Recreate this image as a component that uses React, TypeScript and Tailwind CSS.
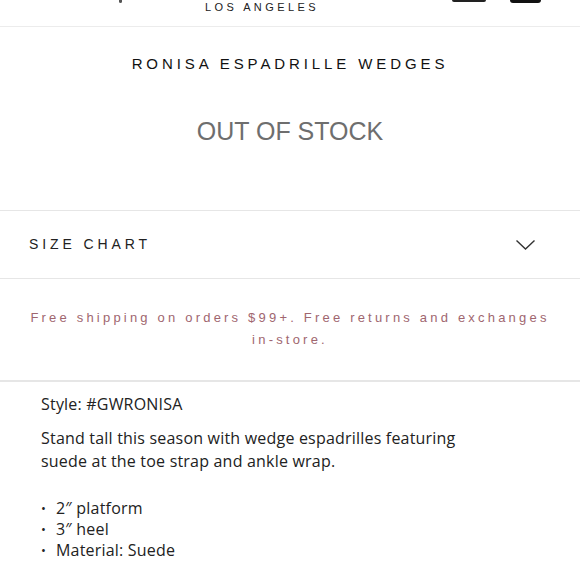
const sans = { fontFamily: '"Liberation Sans", Arial, sans-serif' };
const body = { fontFamily: '"Open Sans", "Liberation Sans", Arial, sans-serif' };

function Header() {
  return (
    <header className="relative h-[27px] border-b border-[#ececec]">
      {/* icons scrolled mostly out of view above the top edge */}
      <div className="absolute left-[119px] top-0 h-[3px] w-[3px] rounded-b-full bg-[#555]" />
      <div className="absolute left-[452px] top-0 h-[2px] w-[34px] rounded-b-sm bg-[#222]" />
      <div className="absolute left-[510px] top-0 h-[3px] w-[31px] rounded-b-[4px] bg-[#111]" />
      <div className="flex h-full items-start justify-center pr-[56px] pt-[2px]">
        <span className="text-[11px] leading-[11px] tracking-[3.4px] text-[#222]" style={sans}>
          LOS ANGELES
        </span>
      </div>
    </header>
  );
}

function Title() {
  return (
    <section className="flex flex-col items-center border-b border-[#e6e6e6] pb-[65px] pt-[27px]">
      <h1 className="text-[15px] leading-[20px] tracking-[3.9px] text-[#111]" style={sans}>
        RONISA ESPADRILLE WEDGES
      </h1>
      <p className="mt-[43px] text-[25px] leading-[28px] text-[#6e6e6e]" style={sans}>
        OUT OF STOCK
      </p>
    </section>
  );
}

function SizeChart() {
  return (
    <div className="flex h-[68px] items-center justify-between border-b border-[#e6e6e6] pl-[29px] pr-[45px]">
      <span className="text-[14px] tracking-[3.9px] text-[#222]" style={sans}>
        SIZE CHART
      </span>
      <svg width="19" height="10" viewBox="0 0 19 10" fill="none" stroke="#333" strokeWidth="1.4">
        <polyline points="0.5,0.6 9.5,9 18.5,0.6" />
      </svg>
    </div>
  );
}

function Shipping() {
  return (
    <div className="border-b-2 border-[#e6e6e6] px-[20px] pb-[29px] pt-[28px] text-center">
      <p className="text-[13px] leading-[22px] tracking-[3.2px] text-[#a0666f]" style={sans}>
        Free shipping on orders $99+. Free returns and exchanges <span className="whitespace-nowrap">in-store.</span>
      </p>
    </div>
  );
}

function Details() {
  const bullets = ['2″ platform', '3″ heel', 'Material: Suede'];
  return (
    <div className="pl-[41px] pt-[11px] text-[16px] tracking-[0.2px] text-[#222]" style={body}>
      <p className="leading-[23px]">Style: #GWRONISA</p>
      <p className="mt-[11px] w-[440px] leading-[23px]">
        Stand tall this season with wedge espadrilles featuring suede at the toe strap and ankle wrap.
      </p>
      <ul className="mt-[25px]">
        {bullets.map(b => (
          <li key={b} className="flex leading-[21px]">
            <span className="w-[15px] text-[13px]">•</span>
            <span>{b}</span>
          </li>
        ))}
      </ul>
    </div>
  );
}

export default function App() {
  return (
    <div className="h-[580px] w-[580px] overflow-hidden bg-white">
      <Header />
      <Title />
      <SizeChart />
      <Shipping />
      <Details />
    </div>
  );
}
